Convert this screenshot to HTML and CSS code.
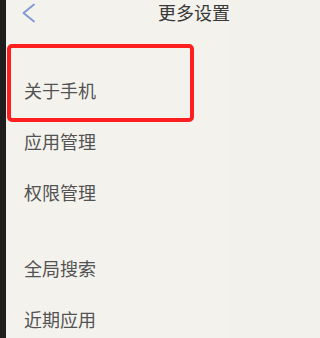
FILE: index.html
```html
<!DOCTYPE html>
<html lang="zh-CN">
<head>
<meta charset="utf-8">
<title>更多设置</title>
<link rel="stylesheet" href="styles.css">
</head>
<body>
<div class="screen">
  <div class="edge"></div>
  <main class="page">
    <header class="topbar">
      <svg class="back" width="14" height="20" viewBox="0 0 14 20" aria-hidden="true">
        <polyline points="12,1.5 1.5,10 12,18.5" fill="none" stroke="#7f97d2" stroke-width="1.8" stroke-linecap="round" stroke-linejoin="round"/>
      </svg>
      <h1 class="title">更多设置</h1>
    </header>
    <ul class="group first">
      <li class="item">关于手机</li>
      <li class="item">应用管理</li>
      <li class="item">权限管理</li>
    </ul>
    <ul class="group">
      <li class="item">全局搜索</li>
      <li class="item">近期应用</li>
    </ul>
    <div class="highlight"></div>
  </main>
</div>
</body>
</html>
```

FILE: styles.css
```css
html, body {
  margin: 0;
  padding: 0;
  width: 230px;
  height: 338px;
  overflow: hidden;
  background: #f3f1ec;
  font-family: "Noto Sans CJK SC", "Noto Sans", sans-serif;
}

.screen {
  display: flex;
  width: 230px;
  height: 338px;
}

.edge {
  flex: 0 0 6px;
  background: #1e1e1e;
}

.page {
  position: relative;
  flex: 1;
  min-width: 0;
  background: #f4f2ed;
  overflow: hidden;
}

.topbar {
  display: flex;
  align-items: flex-start;
  height: 26px;
  padding-left: 16px;
}

.back {
  margin-top: 3px;
  flex: 0 0 auto;
}

.title {
  margin: 0 0 0 auto;
  font-size: 18px;
  line-height: 24px;
  font-weight: 400;
  color: #383838;
  white-space: nowrap;
  flex: 0 0 72px;
  overflow: visible;
}

.group {
  list-style: none;
  margin: 0;
  padding: 0;
}

.group.first {
  margin-top: 38px;
  margin-bottom: 25px;
}

.item {
  height: 51px;
  display: flex;
  align-items: center;
  padding-left: 18px;
  font-size: 18px;
  line-height: 24px;
  color: #535353;
}

.highlight {
  position: absolute;
  left: 1px;
  top: 44px;
  width: 187px;
  height: 78px;
  box-sizing: border-box;
  border: 4px solid #ff1f1f;
  border-radius: 5px;
}
```
